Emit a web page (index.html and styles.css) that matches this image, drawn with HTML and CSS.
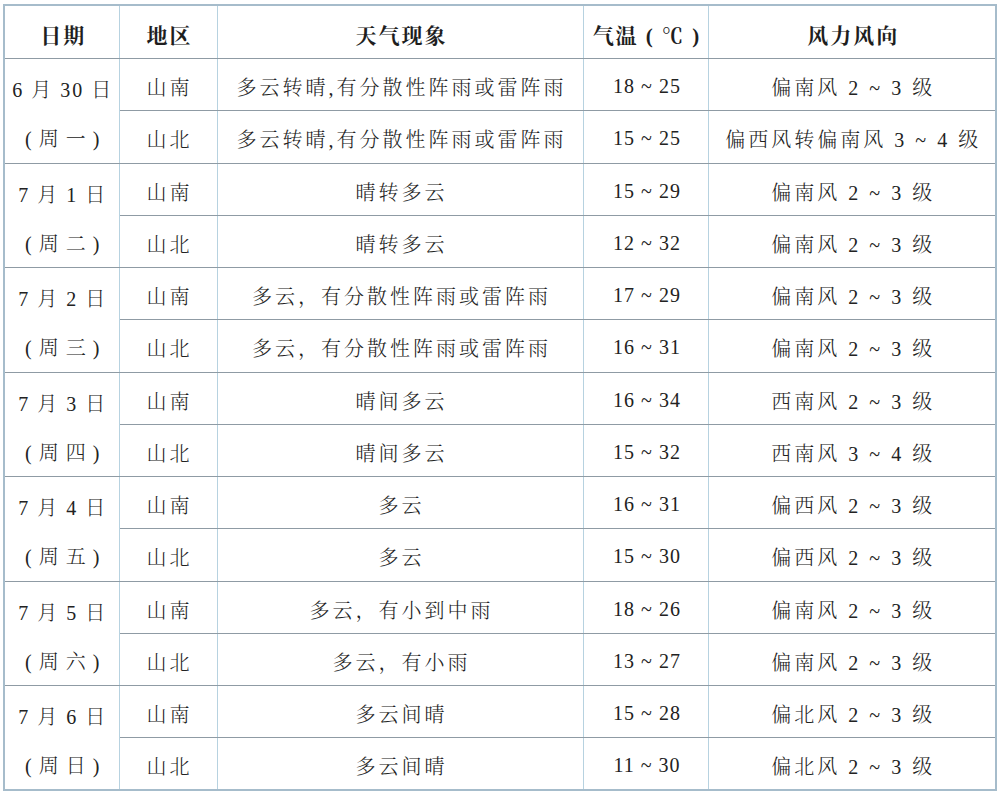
FILE: index.html
```html
<!DOCTYPE html>
<html lang="zh-CN">
<head>
<meta charset="utf-8">
<link rel="stylesheet" href="styles.css">
</head>
<body>
<div class="wrap">
<table class="wx">
  <colgroup>
    <col class="c-date"><col class="c-area"><col class="c-desc"><col class="c-temp"><col class="c-wind">
  </colgroup>
  <thead>
    <tr class="head">
      <th>日期</th><th>地区</th><th>天气现象</th><th>气温 ( ℃ )</th><th>风力风向</th>
    </tr>
  </thead>
  <tbody>
    <tr>
      <td class="date" rowspan="2"><div class="dl">6 月 30 日</div><div class="dl wk">( 周 一 )</div></td>
      <td>山南</td><td>多云转晴,有分散性阵雨或雷阵雨</td><td class="num">18 ~ 25</td><td>偏南风 2 ~ 3 级</td>
    </tr>
    <tr class="sub">
      <td>山北</td><td>多云转晴,有分散性阵雨或雷阵雨</td><td class="num">15 ~ 25</td><td>偏西风转偏南风 3 ~ 4 级</td>
    </tr>
    <tr>
      <td class="date" rowspan="2"><div class="dl">7 月 1 日</div><div class="dl wk">( 周 二 )</div></td>
      <td>山南</td><td>晴转多云</td><td class="num">15 ~ 29</td><td>偏南风 2 ~ 3 级</td>
    </tr>
    <tr class="sub">
      <td>山北</td><td>晴转多云</td><td class="num">12 ~ 32</td><td>偏南风 2 ~ 3 级</td>
    </tr>
    <tr>
      <td class="date" rowspan="2"><div class="dl">7 月 2 日</div><div class="dl wk">( 周 三 )</div></td>
      <td>山南</td><td>多云，有分散性阵雨或雷阵雨</td><td class="num">17 ~ 29</td><td>偏南风 2 ~ 3 级</td>
    </tr>
    <tr class="sub">
      <td>山北</td><td>多云，有分散性阵雨或雷阵雨</td><td class="num">16 ~ 31</td><td>偏南风 2 ~ 3 级</td>
    </tr>
    <tr>
      <td class="date" rowspan="2"><div class="dl">7 月 3 日</div><div class="dl wk">( 周 四 )</div></td>
      <td>山南</td><td>晴间多云</td><td class="num">16 ~ 34</td><td>西南风 2 ~ 3 级</td>
    </tr>
    <tr class="sub">
      <td>山北</td><td>晴间多云</td><td class="num">15 ~ 32</td><td>西南风 3 ~ 4 级</td>
    </tr>
    <tr>
      <td class="date" rowspan="2"><div class="dl">7 月 4 日</div><div class="dl wk">( 周 五 )</div></td>
      <td>山南</td><td>多云</td><td class="num">16 ~ 31</td><td>偏西风 2 ~ 3 级</td>
    </tr>
    <tr class="sub">
      <td>山北</td><td>多云</td><td class="num">15 ~ 30</td><td>偏西风 2 ~ 3 级</td>
    </tr>
    <tr>
      <td class="date" rowspan="2"><div class="dl">7 月 5 日</div><div class="dl wk">( 周 六 )</div></td>
      <td>山南</td><td>多云，有小到中雨</td><td class="num">18 ~ 26</td><td>偏南风 2 ~ 3 级</td>
    </tr>
    <tr class="sub">
      <td>山北</td><td>多云，有小雨</td><td class="num">13 ~ 27</td><td>偏南风 2 ~ 3 级</td>
    </tr>
    <tr>
      <td class="date" rowspan="2"><div class="dl">7 月 6 日</div><div class="dl wk">( 周 日 )</div></td>
      <td>山南</td><td>多云间晴</td><td class="num">15 ~ 28</td><td>偏北风 2 ~ 3 级</td>
    </tr>
    <tr class="sub">
      <td>山北</td><td>多云间晴</td><td class="num">11 ~ 30</td><td>偏北风 2 ~ 3 级</td>
    </tr>
  </tbody>
</table>
</div>
</body>
</html>
```

FILE: styles.css
```css
html, body {
  margin: 0;
  padding: 0;
  background: #ffffff;
}

.wrap {
  padding: 4px 0 0 3px;
}

.wx {
  border-collapse: collapse;
  table-layout: fixed;
  width: 994px;
  border: 2px solid #a6bccb;
  font-family: "Liberation Serif", "Noto Serif CJK SC", "Noto Sans CJK SC", serif;
  font-size: 20px;
  font-weight: 300;
  color: #222222;
}

.c-date { width: 115px; }
.c-area { width: 98px; }
.c-desc { width: 366px; }
.c-temp { width: 125px; }
.c-wind { width: 288px; }

.wx th,
.wx td {
  border-left: 1px solid #b7d2e0;
  border-right: 1px solid #b7d2e0;
  border-top: 1px solid #8f9ba4;
  border-bottom: 1px solid #8f9ba4;
  text-align: center;
  vertical-align: middle;
  padding: 4px 0 0 3px;
  letter-spacing: 3px;
  white-space: nowrap;
}

.head th {
  height: 48px;
  font-family: "Liberation Serif", "Noto Serif CJK SC", "Noto Sans CJK SC", serif;
  font-weight: 700;
  letter-spacing: 2px;
  font-size: 21px;
  color: #1e1e1e;
  padding-top: 4px;
}

.wx tbody tr {
  height: 52.25px;
}

.wx td.num {
  letter-spacing: 1px;
}

.wx td.date {
  padding: 0 0 0 2px;
}

.dl {
  height: 50px;
  display: flex;
  align-items: center;
  justify-content: center;
  letter-spacing: 2px;
  padding-top: 6px;
  box-sizing: border-box;
}

.dl.wk {
  letter-spacing: 1px;
  padding-top: 4px;
}
```
